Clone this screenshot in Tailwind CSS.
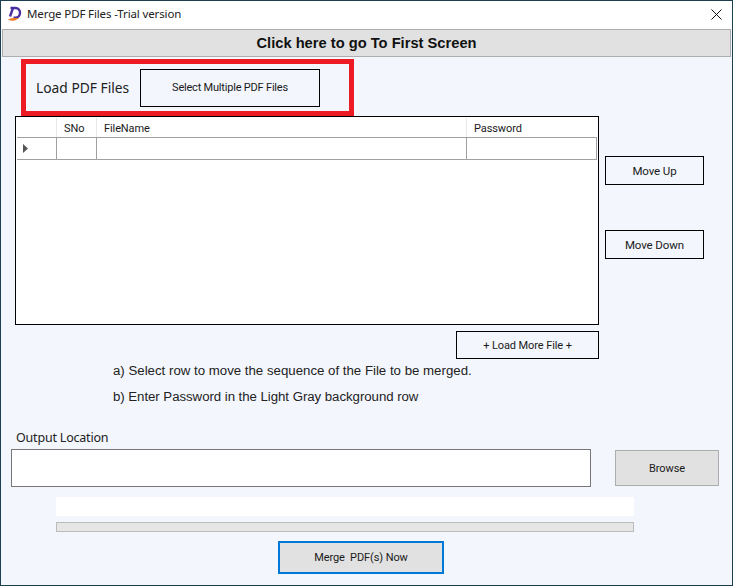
<!DOCTYPE html>
<html lang="en">
<head>
  <meta charset="UTF-8" />
  <meta name="viewport" content="width=device-width, initial-scale=1.0" />
  <title>Merge PDF Files</title>
  <script src="https://cdn.jsdelivr.net/npm/@tailwindcss/browser@4"></script>
</head>
<body class="bg-[#f3f6fd] overflow-hidden">
  <div class="w-[733px] h-[586px] flex flex-col border border-[#1d4050] bg-[#f3f6fd] text-[#1a1a1a] font-['Roboto',sans-serif] overflow-hidden">

    <!-- Title bar -->
    <header class="h-[28px] shrink-0 bg-white flex items-center pl-[6px] pr-[10px] pb-[2px]">
      <svg class="w-[15px] h-[16px] shrink-0" viewBox="0 0 15 16" fill="none">
        <path d="M3.5 2H8.5C11.5 2 13 4.2 13 6.8C13 9.5 11.3 11.6 8.5 11.6H6.5" stroke="#4b2fa0" stroke-width="2.4"/>
        <path d="M6 2L3 10.5" stroke="#4b2fa0" stroke-width="2.4"/>
        <path d="M1 13.5C4 11.8 8 12 12 12.2L8 14.6C5.5 15 3 14.6 1 13.5Z" fill="#ee7d22"/>
      </svg>
      <span class="ml-[5px] text-[11.5px] leading-none text-[#222] tracking-[-0.13px] font-['Noto_Sans',sans-serif]">Merge PDF Files -Trial version</span>
      <svg class="w-[11px] h-[11px] ml-auto" viewBox="0 0 11 11" stroke="#111" stroke-width="1">
        <path d="M0.5 0.5L10.5 10.5M10.5 0.5L0.5 10.5"/>
      </svg>
    </header>

    <button class="mx-[1px] h-[28px] shrink-0 bg-[#e1e1e1] border border-[#adadad] text-[14.7px] font-bold text-[#111] font-['Liberation_Sans',sans-serif]">Click here to go To First Screen</button>

    <!-- Load row -->
    <div class="ml-[20px] mt-[2px] w-[333px] h-[57px] shrink-0 border-[5px] border-[#ed1c24] flex items-center pl-[10px]">
      <span class="mt-[2px] text-[13.8px] text-[#222] w-[104px] font-['Noto_Sans',sans-serif]">Load PDF Files</span>
      <button class="w-[180px] h-[38px] pt-[2px] border border-black text-[11px] tracking-[-0.2px]">Select Multiple PDF Files</button>
    </div>

    <!-- Grid and side buttons -->
    <div class="flex shrink-0 ml-[14px]">
      <div class="w-[584px] h-[209px] border border-black p-[1px] bg-white">
        <div class="grid grid-cols-[40px_40px_370px_130px] text-[11px] tracking-[-0.1px]">
          <div class="h-[19px] border-r border-[#e8e8e8]"></div>
          <div class="h-[19px] border-r border-[#e8e8e8] pl-[7px] leading-[21px]">SNo</div>
          <div class="h-[19px] border-r border-[#e8e8e8] pl-[7px] leading-[21px]">FileName</div>
          <div class="h-[19px] pl-[7px] leading-[21px]">Password</div>
          <div class="h-[23px] border-y border-r border-[#a0a0a0] flex items-center pl-[6px]">
            <svg class="w-[5px] h-[9px]" viewBox="0 0 5 9"><path d="M0 0L5 4.5L0 9Z" fill="#555"/></svg>
          </div>
          <div class="h-[23px] border-y border-r border-[#a0a0a0]"></div>
          <div class="h-[23px] border-y border-r border-[#a0a0a0]"></div>
          <div class="h-[23px] border-y border-r border-[#a0a0a0]"></div>
        </div>
      </div>
      <div class="ml-[6px] pt-[40px] flex flex-col gap-[45px]">
        <button class="w-[99px] h-[29px] pt-[2px] border border-black text-[11.5px] tracking-[-0.1px]">Move Up</button>
        <button class="w-[99px] h-[29px] pt-[2px] border border-black text-[11.5px] tracking-[-0.1px]">Move Down</button>
      </div>
    </div>

    <button class="ml-[455px] mt-[6px] w-[143px] h-[28px] pt-[2px] shrink-0 border border-black text-[11px] tracking-[-0.1px]">+ Load More File +</button>

    <!-- Hints -->
    <div class="ml-[112px] mt-[2px] text-[13.25px] text-[#222] font-['Liberation_Sans',sans-serif]">
      <p class="h-[20px] leading-[20px]">a) Select row to move the sequence of the File to be merged.</p>
      <p class="mt-[6px] h-[20px] leading-[20px] tracking-[-0.05px]">b) Enter Password in the Light Gray background row</p>
    </div>

    <!-- Output location -->
    <label class="ml-[15px] mt-[22px] h-[18px] leading-[18px] text-[12.5px] tracking-[-0.2px] text-[#222] font-['Noto_Sans',sans-serif]">Output Location</label>
    <div class="flex items-center ml-[10px] mt-[2px] shrink-0">
      <div class="w-[580px] h-[38px] bg-white border border-[#777]"></div>
      <button class="ml-[24px] w-[104px] h-[36px] pt-[2px] bg-[#e1e1e1] border border-[#adadad] text-[11px] tracking-[-0.1px]">Browse</button>
    </div>

    <!-- Progress -->
    <div class="ml-[55px] mt-[10px] w-[578px] h-[19px] bg-white shrink-0"></div>
    <div class="ml-[55px] mt-[6px] w-[578px] h-[10px] bg-[#e6e6e6] border border-[#bcbcbc] shrink-0"></div>

    <button class="ml-[277px] mt-[9px] w-[166px] h-[33px] pt-[2px] shrink-0 bg-[#e1e1e1] border-2 border-[#0078d7] text-[11px] tracking-[-0.1px]">Merge&nbsp; PDF(s) Now</button>
  </div>
</body>
</html>
